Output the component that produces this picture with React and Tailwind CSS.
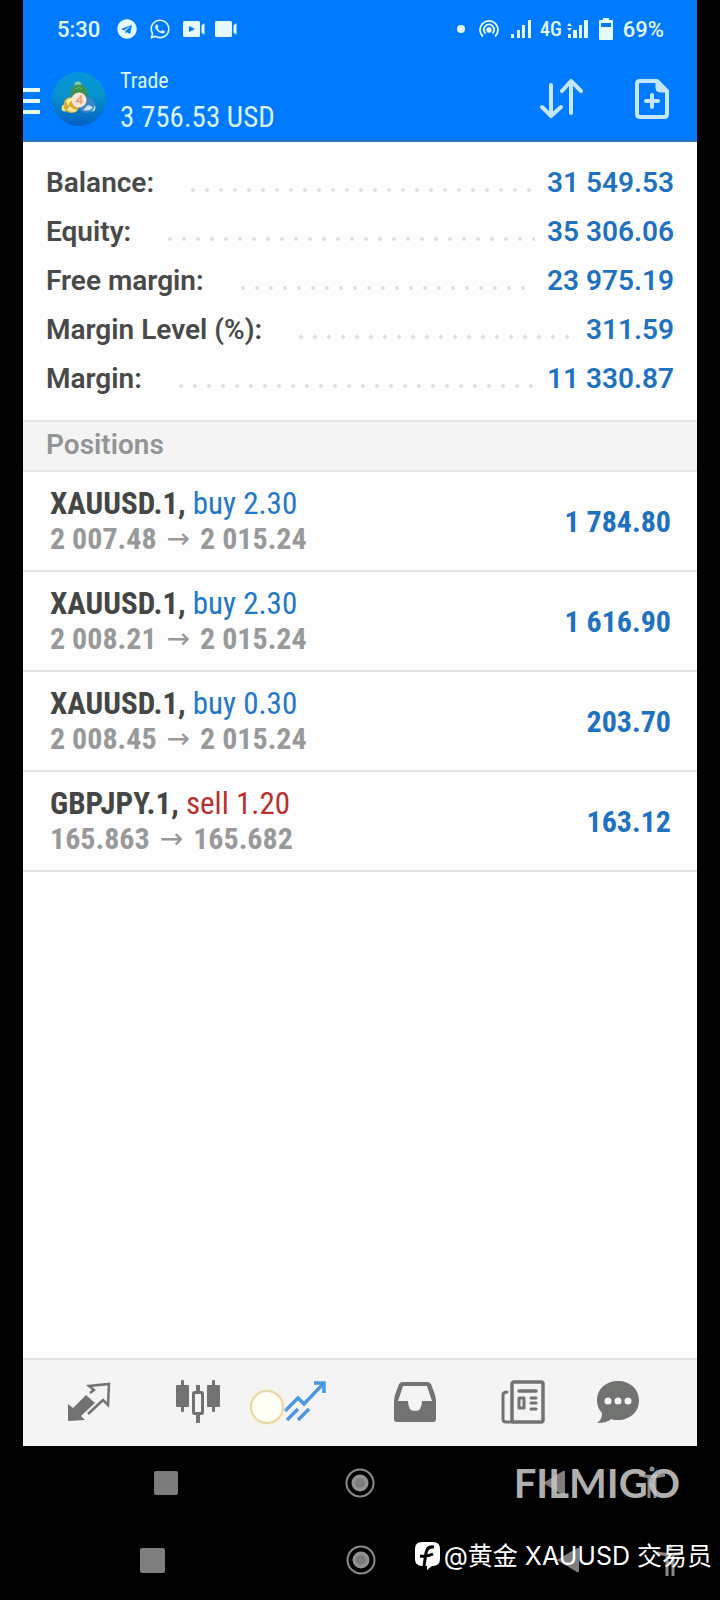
import { FaTelegram, FaWhatsapp } from "react-icons/fa";

const account = [
  { label: "Balance:", value: "31 549.53" },
  { label: "Equity:", value: "35 306.06" },
  { label: "Free margin:", value: "23 975.19" },
  { label: "Margin Level (%):", value: "311.59" },
  { label: "Margin:", value: "11 330.87" },
];

const positions = [
  { id: 1, symbol: "XAUUSD.1", side: "buy", lots: "2.30", open: "2 007.48", current: "2 015.24", profit: "1 784.80" },
  { id: 2, symbol: "XAUUSD.1", side: "buy", lots: "2.30", open: "2 008.21", current: "2 015.24", profit: "1 616.90" },
  { id: 3, symbol: "XAUUSD.1", side: "buy", lots: "0.30", open: "2 008.45", current: "2 015.24", profit: "203.70" },
  { id: 4, symbol: "GBPJPY.1", side: "sell", lots: "1.20", open: "165.863", current: "165.682", profit: "163.12" },
];

const StatusBar = () => (
  <div className="flex h-[58px] items-center justify-between pl-[34px] pr-[33px] text-[22px] font-medium text-[#e6fbff]">
    <div className="flex items-center">
      <span className="mr-[17px]">5:30</span>
      <FaTelegram className="mr-3 h-5 w-5" />
      <FaWhatsapp className="mr-3 h-[22px] w-[22px]" />
      <svg className="mr-[10px] h-4 w-[22px]" viewBox="0 0 22 16" fill="currentColor">
        <path fillRule="evenodd" d="M1.500 0H15.500Q17 0 17 1.500V14.500Q17 16 15.500 16H1.500Q0 16 0 14.500V1.500Q0 0 1.500 0ZM6 5V11L12 8Z" />
        <path d="M18.500 4.500L21.500 2V14L18.500 11.500Z" />
      </svg>
      <svg className="h-4 w-[22px]" viewBox="0 0 22 16" fill="currentColor">
        <rect width="17" height="16" rx="1.500" />
        <path d="M18.500 4.500L21.500 2V14L18.500 11.500Z" />
      </svg>
    </div>
    <div className="flex items-center">
      <span className="mr-[14px] h-2 w-2 rounded-full bg-current" />
      <svg className="mr-3 h-5 w-5" viewBox="0 0 20 20" fill="none" stroke="currentColor" strokeWidth="1.800">
        <path d="M4 17.500A9 9 0 1 1 16 17.500" />
        <path d="M6.500 14.500A5.200 5.200 0 1 1 13.500 14.500" />
        <circle cx="10" cy="11" r="1.800" fill="currentColor" />
      </svg>
      <svg className="mr-2 h-[18px] w-[21px]" viewBox="0 0 21 18" fill="currentColor">
        <rect x="0" y="14" width="3" height="4" />
        <rect x="6" y="10" width="3" height="8" />
        <rect x="11" y="5" width="3" height="13" />
        <rect x="17" y="0" width="3" height="18" />
      </svg>
      <span className="mr-[5px] font-['Roboto_Condensed',Roboto,sans-serif] text-xl">4G</span>
      <svg className="mr-[10px] h-[18px] w-[22px]" viewBox="0 0 22 18" fill="currentColor">
        <path d="M0 6L2.500 3L5 6ZM0 8H5L2.500 11Z" />
        <rect x="1" y="14" width="3" height="4" />
        <rect x="6" y="10" width="4" height="8" />
        <rect x="12" y="5" width="3" height="13" />
        <rect x="17" y="0" width="4" height="18" />
      </svg>
      <svg className="mr-[10px] h-[22px] w-[14px]" viewBox="0 0 14 22" fill="currentColor">
        <path fillRule="evenodd" d="M4 0H10V2H13Q14 2 14 3V21Q14 22 13 22H1Q0 22 0 21V3Q0 2 1 2H4ZM2 5V9H12V5Z" />
      </svg>
      <span>69%</span>
    </div>
  </div>
);

const Logo = () => (
  <svg className="h-14 w-14 shrink-0" viewBox="0 0 56 56" aria-hidden="true">
    <defs>
      <linearGradient id="disc" x1="0" y1="0" x2="0" y2="1">
        <stop offset="0" stopColor="#0496dc" />
        <stop offset="0.4" stopColor="#0894cc" />
        <stop offset="1" stopColor="#0560c4" />
      </linearGradient>
    </defs>
    <circle cx="28" cy="28" r="27" fill="url(#disc)" />
    <circle cx="27" cy="14" r="3.500" fill="#8ccfa0" />
    <circle cx="28" cy="22" r="8.500" fill="#3c9350" />
    <path d="M21 20Q28 13 35 20Q32 17 28 17Q24 17 21 20Z" fill="#b5dc7a" />
    <circle cx="14" cy="37" r="3.500" fill="#e6dfa0" />
    <circle cx="20.500" cy="34" r="8" fill="#d6ae35" />
    <path d="M15 30Q19 25 24 28Q19 29 17 35Z" fill="#f8eea0" />
    <path d="M16 39Q22 43 27 39Q22 39 19 35Z" fill="#f3e59a" />
    <circle cx="41" cy="37" r="3.500" fill="#b5dcf2" />
    <circle cx="35.500" cy="34" r="8" fill="#3c87c6" />
    <path d="M32 39Q39 41 42 36L37 34Z" fill="#c4e3f7" />
    <circle cx="28" cy="29" r="7.500" fill="#fbe6d6" />
    <path d="M30 33V25L25.500 30.500H32" fill="none" stroke="#e3a078" strokeWidth="1.500" />
  </svg>
);

const Header = () => (
  <div className="flex h-[82px] items-center pr-7">
    <button type="button" aria-label="Menu" className="mr-[11px] flex w-[17px] flex-col gap-[7px] pt-1">
      <span className="h-1 bg-[#e6fbff]" />
      <span className="h-1 bg-[#e6fbff]" />
      <span className="h-1 bg-[#e6fbff]" />
    </button>
    <Logo />
    <div className="ml-[13px] flex-1 pt-1 font-['Roboto_Condensed',Roboto,sans-serif] text-[#d9f6ff]">
      <h1 className="text-[22px] leading-8">Trade</h1>
      <p className="text-[29px] leading-10">3 756.53 USD</p>
    </div>
    <button type="button" aria-label="Sort" className="mr-[52px] text-[#c4e6ff]">
      <svg className="h-10 w-11" viewBox="0 0 44 40" fill="none" stroke="currentColor" strokeWidth="4" strokeLinecap="round" strokeLinejoin="round">
        <path d="M12 6V37M3 28L12 37L22 28" />
        <path d="M32 34V3M23 12L32 2L42 12" />
      </svg>
    </button>
    <button type="button" aria-label="New order" className="text-[#c4e6ff]">
      <svg className="h-10 w-[34px]" viewBox="0 0 34 40" fill="none" stroke="currentColor" strokeWidth="4" strokeLinecap="round" strokeLinejoin="round">
        <path d="M5 2H22L32 12V35Q32 38 29 38H5Q2 38 2 35V5Q2 2 5 2Z" />
        <path d="M21 3V9Q21 13 25 13H31Z" fill="currentColor" strokeWidth="1" />
        <path d="M17 16V28M11 22H23" />
      </svg>
    </button>
  </div>
);

const Summary = () => (
  <dl className="pb-[17px] pl-[23px] pr-[23px] pt-4 text-[28px] font-semibold">
    {account.map((row) => (
      <div key={row.label} className="flex h-[49px] items-center">
        <dt className="text-[#484a49]">{row.label}</dt>
        <span className="ml-8 mr-3 mt-[14px] h-1 flex-1 bg-[radial-gradient(circle,#dcdcdc_1px,#e4e4e4_2px,transparent_2px)] bg-[length:14px_4px]" />
        <dd className="text-[#1f72bf]">{row.value}</dd>
      </div>
    ))}
  </dl>
);

const Position = ({ item }) => (
  <li className="flex h-[100px] items-center justify-between border-b-2 border-[#e4e4e4] pl-[27px] pr-[26px] font-['Roboto_Condensed',Roboto,sans-serif] text-[30px] leading-[35px]">
    <div>
      <p className="text-[31px] font-bold text-[#444645]">
        {item.symbol},{" "}
        <span className={item.side === "buy" ? "font-normal text-[#1f78c8]" : "font-normal text-[#b8312f]"}>
          {item.side} {item.lots}
        </span>
      </p>
      <p className="flex items-center font-bold text-[#979a99]">
        {item.open}
        <span className="mx-[10px] font-['DejaVu_Sans',sans-serif] text-[28px] font-normal">→</span>
        {item.current}
      </p>
    </div>
    <span className="font-bold text-[#1f72bf]">{item.profit}</span>
  </li>
);

const TabBar = () => (
  <nav className="grid h-[88px] grid-cols-[repeat(5,4fr)_3fr] items-center justify-items-center border-t-2 border-[#e4e4e4] bg-[#f4f4f4] pb-[2px] pl-3 pr-[38px] text-[#717371]">
    <button type="button" aria-label="Quotes">
      <svg className="h-11 w-11" viewBox="0 0 44 44">
        <path d="M1 41V24L6 28L19 15L28 23L14 36L18 40Z" fill="currentColor" />
        <path d="M23 13L27 10L22 6L42 4L41 25L36 20L21 34" fill="none" stroke="currentColor" strokeWidth="2.500" />
      </svg>
    </button>
    <button type="button" aria-label="Charts">
      <svg className="h-11 w-11" viewBox="0 0 44 44" fill="currentColor">
        <rect x="0" y="5" width="13" height="22" rx="1" />
        <rect x="5" y="0" width="3" height="32" rx="1" />
        <rect x="31" y="5" width="13" height="22" rx="1" />
        <rect x="36" y="0" width="3" height="32" rx="1" />
        <rect x="20" y="5" width="4" height="8" />
        <rect x="20" y="34" width="4" height="9" />
        <rect x="17.500" y="12.500" width="9" height="21" rx="1" fill="none" stroke="currentColor" strokeWidth="3" />
      </svg>
    </button>
    <button type="button" aria-label="Trade" className="relative text-[#4a97e4]">
      <svg className="h-11 w-11" viewBox="0 0 44 44" fill="none" stroke="currentColor" strokeWidth="3.500">
        <path d="M1 31L14 18L20 24L40 3" />
        <path d="M30 3H40V13" />
        <path d="M3 40L14 29M14 40L25 29" />
      </svg>
      {/* touch indicator */}
      <span className="absolute -left-[34px] top-[10px] h-[34px] w-[34px] rounded-full border-2 border-[#e6d7a4] bg-[#fffdf4] shadow-[0_0_4px_#fbeec0]" />
    </button>
    <button type="button" aria-label="History">
      <svg className="h-11 w-11" viewBox="0 0 44 44">
        <path fillRule="evenodd" fill="currentColor" d="M10 2H34Q37 2 38 4L42 15Q43 18 43 22V39Q43 42 40 42H4Q1 42 1 39V22Q1 18 2 15L6 4Q7 2 10 2ZM10 6L5 21H15Q15 31 22 31Q29 31 29 21H39L34 6Z" />
      </svg>
    </button>
    <button type="button" aria-label="News">
      <svg className="h-11 w-11" viewBox="0 0 44 44" fill="none" stroke="currentColor" strokeWidth="3.500" strokeLinecap="round" strokeLinejoin="round">
        <rect x="11" y="2" width="31" height="40" rx="2" />
        <path d="M6 12Q2 12 2 15V39Q2 42 5 42H12" strokeWidth="3" />
        <path d="M18 11H35" />
        <rect x="18" y="18" width="5" height="10" strokeWidth="3" />
        <path d="M30 18H35M30 23H35M30 29H35" strokeWidth="3" />
      </svg>
    </button>
    <button type="button" aria-label="Messages">
      <svg className="h-11 w-11" viewBox="0 0 44 44">
        <path fill="currentColor" d="M22 1C34 1 43 9 43 20.500C43 32 34 40 22 40C19 40 17 40 15 39C12 42 7 43 1 43C4 41 6 38 6 33C3 30 1 26 1 20.500C1 9 10 1 22 1Z" />
        <circle cx="12" cy="21" r="3.500" fill="#f4f4f4" />
        <circle cx="22" cy="21" r="3.500" fill="#f4f4f4" />
        <circle cx="32" cy="21" r="3.500" fill="#f4f4f4" />
      </svg>
    </button>
  </nav>
);

const HomeIcon = () => (
  <svg className="h-[30px] w-[30px]" viewBox="0 0 30 30">
    <circle cx="15" cy="15" r="13.500" fill="none" stroke="#8c8c8c" strokeWidth="2" />
    <circle cx="15" cy="15" r="8.500" fill="#929292" />
    <circle cx="15" cy="15" r="5" fill="#7c7c7c" />
  </svg>
);

const BackIcon = () => (
  <svg className="h-[26px] w-6" viewBox="0 0 24 26">
    <path d="M1 13L21 1Q23 0 23 2V24Q23 26 21 25Z" fill="#7e7e7e" />
  </svg>
);

const AccessIcon = () => (
  <svg className="h-8 w-7" viewBox="0 0 28 32" fill="none" stroke="#8a8a8a" strokeWidth="3">
    <circle cx="14" cy="3" r="2.500" fill="#8a8a8a" stroke="none" />
    <path d="M1 9Q14 12 27 9" />
    <path d="M11 10V32M17 10V32M11 19H17" />
  </svg>
);

export default function App() {
  return (
    <div className="flex min-h-screen flex-col bg-black font-[Roboto,sans-serif]">
      <div className="mx-[23px] flex flex-1 flex-col bg-[#fdfdfd]">
        <header className="border-b-2 border-[#2f74b8] bg-[#007aff]">
          <StatusBar />
          <Header />
        </header>
        <main className="flex-1">
          <Summary />
          <h2 className="h-[52px] border-y-2 border-[#e4e4e4] bg-[#f4f4f4] pl-[23px] text-[28px] font-semibold leading-[46px] text-[#939594]">
            Positions
          </h2>
          <ul>
            {positions.map((item) => (
              <Position key={item.id} item={item} />
            ))}
          </ul>
        </main>
        <TabBar />
      </div>

      {/* recorded phone's navigation bar */}
      <div className="relative flex h-[74px] items-center justify-between px-[154px]">
        <span className="h-6 w-6 rounded-xs bg-[#7b7c7b]" />
        <HomeIcon />
        <BackIcon />
        <span className="absolute right-[54px] top-5">
          <AccessIcon />
        </span>
        <span className="absolute right-10 top-3 font-[Lato,sans-serif] text-[40px] font-bold leading-[50px] text-[#c8c8c8]/90">
          FILMIGO
        </span>
      </div>

      {/* device navigation bar */}
      <div className="relative flex h-20 items-center justify-between px-[140px]">
        <span className="h-[25px] w-[25px] rounded-xs bg-[#7e7e7e]" />
        <HomeIcon />
        <BackIcon />
        <span className="absolute right-9 top-6">
          <AccessIcon />
        </span>
        <div className="absolute right-2 top-[18px] flex items-center text-white">
          <svg className="h-7 w-[25px]" viewBox="0 0 25 28">
            <path d="M7 0H18Q25 0 25 7V17Q25 24 18 24H17L12 28V24H7Q0 24 0 17V7Q0 0 7 0Z" fill="#fff" />
            <path d="M19 5Q12 4 11 11L9 24M5 14Q12 15 18 12" fill="none" stroke="#000" strokeWidth="3" />
          </svg>
          <span className="ml-1 whitespace-nowrap font-[Inter,'Noto_Sans_CJK_SC',sans-serif] text-[25px] leading-9">@黄金 XAUUSD 交易员</span>
        </div>
      </div>
    </div>
  );
}
